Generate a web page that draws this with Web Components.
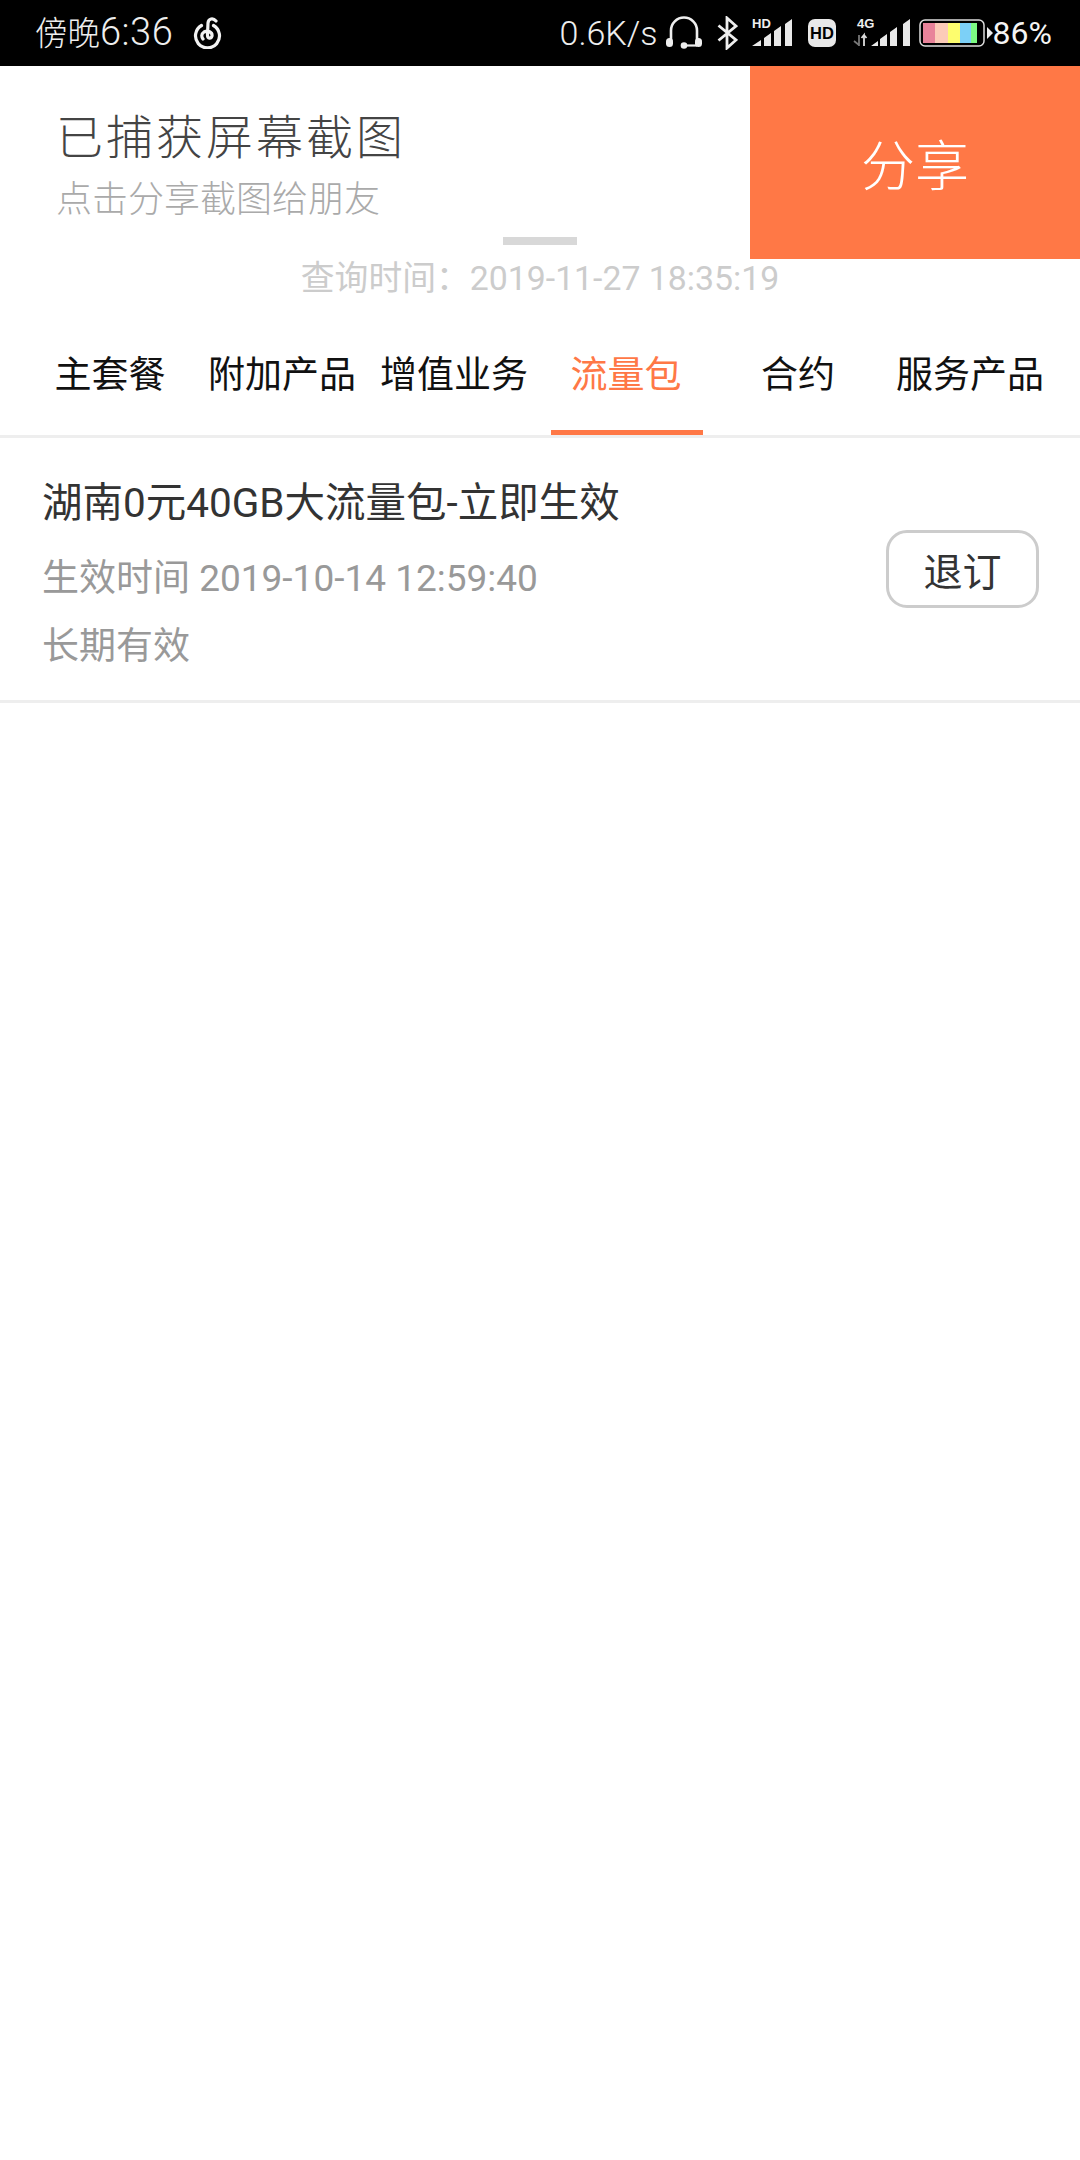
<!DOCTYPE html>
<html lang="zh">
<head>
<meta charset="utf-8">
<title>流量包</title>
<style>
  html, body { margin: 0; background: #fff; }
  body { font-family: Roboto, "Noto Sans CJK SC", sans-serif; width: 1080px; height: 2160px; overflow: hidden; }
  app-page { display: block; }
</style>
</head>
<body>
<app-page></app-page>

<script>
const CJK = 'Roboto, "Noto Sans CJK SC", sans-serif';

class StatusBar extends HTMLElement {
  connectedCallback() {
    this.attachShadow({ mode: "open" });
    this.shadowRoot.innerHTML = `
      <style>
        :host { display: flex; align-items: center; height: 66px; background: #000; color: #eee; font-family: ${CJK}; box-sizing: border-box; padding: 0 28px 0 35px; }
        .time { font-size: 32.500px; line-height: 66px; font-weight: 300; }
        .time b { font-size: 38px; font-weight: 300; letter-spacing: .5px; }
        .music { margin-left: 19px; }
        .right { margin-left: auto; display: flex; align-items: center; }
        .speed, .pct { font-size: 34px; font-weight: 300; line-height: 66px; }
        .pct { font-size: 32px; font-weight: 400; color: #f4f4f4; }
        .battery { margin-left: 9px; display: flex; align-items: center; }
        svg { display: block; flex: none; }
      </style>
      <div class="time">傍晚<b>6:36</b></div>
      <svg class="music" width="30" height="32" viewBox="0 0 30 32" fill="none" stroke="#f2f2f2" stroke-width="3.200" stroke-linecap="round">
        <path d="M9.500 8.500a12 12 0 1 0 12 0"/>
        <path d="M24 4C21 .5 16.500 1.500 16 6l-.5 12c0 4 3.500 4 4.500 1 .5-4-4-6-8-4-3 2-2.500 5-1 7"/>
      </svg>
      <div class="right">
        <span class="speed">0.6K/s</span>
        <svg style="margin-left:8px" width="36" height="34" viewBox="0 0 36 34" fill="none">
          <path d="M5 25V14.500a13 13 0 0 1 26 0V25" stroke="#eee" stroke-width="2.600"/>
          <rect x="0" y="22" width="7" height="9" rx="3.500" fill="#eee"/>
          <rect x="29" y="22" width="7" height="9" rx="3.500" fill="#eee"/>
          <path d="M18 29.500h13" stroke="#eee" stroke-width="2.200"/>
          <circle cx="18" cy="29.500" r="3.300" fill="#eee"/>
        </svg>
        <svg style="margin-left:15px" width="21" height="34" viewBox="0 0 21 34" fill="none" stroke="#eee" stroke-width="2.800">
          <path d="M1.500 9.500 19 24 10 32V2L19 10 1.500 24.500"/>
        </svg>
        <svg style="margin-left:14px" width="40" height="32" viewBox="0 0 40 32">
          <text x="0" y="11" font-family="Liberation Sans" font-weight="700" font-size="13" fill="#eee">HD</text>
          <path d="M0 29l9-6v6zM12 21l7-5v13h-7zM22 14l7-5v20h-7zM33 7l7-5v27h-7z" fill="#e8e8e8"/>
        </svg>
        <svg style="margin-left:16px" width="28" height="28" viewBox="0 0 28 28">
          <rect width="28" height="28" rx="7" fill="#e8e8e8"/>
          <text x="14" y="20" text-anchor="middle" font-family="Liberation Sans" font-weight="700" font-size="16.500" fill="#000">HD</text>
        </svg>
        <svg style="margin-left:17px" width="57" height="32" viewBox="0 0 57 32">
          <text x="4" y="11" font-family="Liberation Sans" font-weight="700" font-size="13" fill="#eee">4G</text>
          <path d="M6 18v11M1 24l5 4" fill="none" stroke="#777" stroke-width="1.800"/>
          <path d="M11 29V18l-2.500 3M11 18l2.500 3" fill="none" stroke="#ddd" stroke-width="1.800"/>
          <path d="M18 29l7-5v5zM27 22l7-5v12h-7zM37 15l7-5v19h-7zM50 7l7-5v27h-7z" fill="#e8e8e8"/>
        </svg>
        <div class="battery">
          <svg width="66" height="28" viewBox="0 0 66 28">
            <rect x="1" y="1" width="64" height="26" rx="5" fill="#000" stroke="#ddd" stroke-width="1.500"/>
            <rect x="4" y="4" width="12" height="20" fill="#e8839a"/>
            <rect x="16" y="4" width="13" height="20" fill="#fccbb8"/>
            <rect x="29" y="4" width="12" height="20" fill="#fdfd6e"/>
            <rect x="41" y="4" width="11" height="20" fill="#7cd0f7"/>
            <rect x="52" y="4" width="6" height="20" fill="#7dfb83"/>
          </svg>
          <svg style="margin-left:2px" width="6" height="12" viewBox="0 0 6 12"><path d="M0 0l6 6-6 6z" fill="#eee"/></svg>
        </div>
        <span class="pct">86%</span>
      </div>
    `;
  }
}
customElements.define("status-bar", StatusBar);

class ShareToast extends HTMLElement {
  connectedCallback() {
    this.attachShadow({ mode: "open" });
    this.shadowRoot.innerHTML = `
      <style>
        :host { display: flex; position: absolute; left: 0; top: 66px; width: 1080px; height: 193px; background: #fff; font-family: ${CJK}; }
        .text { flex: 1; position: relative; padding: 40px 0 0 56px; box-sizing: border-box; }
        .title { font-size: 47px; line-height: 64px; letter-spacing: 3px; color: #444; font-weight: 300; }
        .sub { font-size: 36px; line-height: 46px; margin-top: 7px; color: #aaa; font-weight: 300; }
        .handle { position: absolute; left: 503px; top: 171px; width: 74px; height: 8px; background: #d8d8d8; }
        .share { width: 330px; display: flex; align-items: center; justify-content: center; background: #ff7846; color: #fff; font-size: 54px; font-weight: 300; padding-bottom: 1px; box-sizing: border-box; }
      </style>
      <div class="text">
        <div class="title"><slot name="title"></slot></div>
        <div class="sub"><slot name="sub"></slot></div>
        <div class="handle"></div>
      </div>
      <div class="share"><slot name="action"></slot></div>
    `;
  }
}
customElements.define("share-toast", ShareToast);

class TabItem extends HTMLElement {
  connectedCallback() {
    this.attachShadow({ mode: "open" });
    this.shadowRoot.innerHTML = `
      <style>
        :host { flex: 1; display: flex; flex-direction: column; align-items: center; justify-content: space-between; }
        .label { font-size: 37px; line-height: 132px; height: 120px; color: #111; white-space: nowrap; }
        .bar { width: 152px; height: 5px; margin-left: 2px; background: transparent; }
        :host([active]) .label { color: #ff7846; }
        :host([active]) .bar { background: #ff7846; }
      </style>
      <div class="label"><slot></slot></div>
      <div class="bar"></div>
    `;
  }
}
customElements.define("tab-item", TabItem);

class TabBar extends HTMLElement {
  connectedCallback() {
    this.attachShadow({ mode: "open" });
    this.shadowRoot.innerHTML = `
      <style>
        :host { display: flex; height: 125px; padding: 0 24px; border-bottom: 3px solid #eee; font-family: ${CJK}; }
      </style>
      <slot></slot>
    `;
  }
}
customElements.define("tab-bar", TabBar);

class PackageItem extends HTMLElement {
  connectedCallback() {
    this.attachShadow({ mode: "open" });
    this.shadowRoot.innerHTML = `
      <style>
        :host { display: flex; align-items: center; height: 262px; padding: 0 41px 0 42px; border-bottom: 3px solid #eee; font-family: ${CJK}; }
        .info { flex: 1; padding-top: 14px; }
        .name { font-size: 40.500px; line-height: 68px; color: #333; margin-top: -2px; }
        .meta { font-size: 37px; line-height: 68px; color: #999; margin-top: 8px; }
        .meta + .meta { margin-top: 0; }
        button { width: 153px; height: 78px; padding: 0; background: #fff; border: 3px solid #ccc; border-radius: 21px; font: inherit; font-size: 39px; color: #333; }
      </style>
      <div class="info">
        <div class="name"><slot name="name"></slot></div>
        <div class="meta"><slot name="start"></slot></div>
        <div class="meta"><slot name="term"></slot></div>
      </div>
      <button><slot name="action"></slot></button>
    `;
  }
}
customElements.define("package-item", PackageItem);

class AppPage extends HTMLElement {
  connectedCallback() {
    this.attachShadow({ mode: "open" });
    this.shadowRoot.innerHTML = `
      <style>
        :host { display: block; position: relative; height: 2160px; background: #fff; font-family: ${CJK}; }
        .query { height: 244px; box-sizing: border-box; padding-top: 190px; text-align: center; font-size: 33.800px; line-height: 46px; color: #ccc; }
      </style>
      <status-bar></status-bar>
      <div class="query">查询时间：2019-11-27 18:35:19</div>
      <tab-bar>
        <tab-item>主套餐</tab-item>
        <tab-item>附加产品</tab-item>
        <tab-item>增值业务</tab-item>
        <tab-item active>流量包</tab-item>
        <tab-item>合约</tab-item>
        <tab-item>服务产品</tab-item>
      </tab-bar>
      <package-item>
        <span slot="name">湖南0元40GB大流量包-立即生效</span>
        <span slot="start">生效时间 2019-10-14 12:59:40</span>
        <span slot="term">长期有效</span>
        <span slot="action">退订</span>
      </package-item>
      <share-toast>
        <span slot="title">已捕获屏幕截图</span>
        <span slot="sub">点击分享截图给朋友</span>
        <span slot="action">分享</span>
      </share-toast>
    `;
  }
}
customElements.define("app-page", AppPage);
</script>
</body>
</html>
